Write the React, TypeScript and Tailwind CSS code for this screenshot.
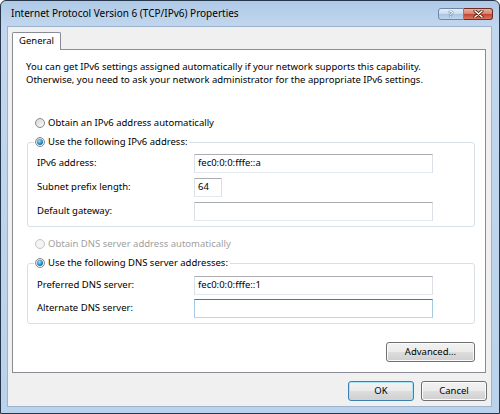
import type { ReactNode } from "react";

function Radio({ checked = false, disabled = false }: { checked?: boolean; disabled?: boolean }) {
    return (
        <span
            className={
                disabled
                    ? "flex h-[10px] w-[10px] shrink-0 items-center justify-center rounded-full border border-[#c4c4c4] bg-[#f4f4f4]"
                    : "flex h-[10px] w-[10px] shrink-0 items-center justify-center rounded-full border border-[#8a8a8a] bg-[linear-gradient(135deg,#d6d6d6,#fbfbfb)]"
            }
        >
            {checked && (
                <span className="h-[6px] w-[6px] rounded-full bg-[radial-gradient(circle_at_40%_35%,#9be3ff,#1f84c8_55%,#0b4f86)]" />
            )}
        </span>
    );
}

function TextBox({ value = "", width, focused = false }: { value?: string; width: string; focused?: boolean }) {
    return (
        <div
            className={
                (focused
                    ? "border-t-[#3d7bad] border-x-[#a4c9e3] border-b-[#b7d9ed] "
                    : "border-t-[#abadb3] border-x-[#dbdfe6] border-b-[#e3e9ef] ") +
                width +
                " flex h-[19px] items-center border bg-white pl-[3px]"
            }
        >
            {value}
        </div>
    );
}

function Field({ label, children }: { label: string; children: ReactNode }) {
    return (
        <div className="flex h-[19px] items-center">
            <span className="w-[157px]">{label}</span>
            {children}
        </div>
    );
}

function Button({ label, width, primary = false }: { label: string; width: string; primary?: boolean }) {
    return (
        <div
            className={
                (primary
                    ? "border-[#3c7fb1] shadow-[inset_0_0_0_1px_#a9e1f7] "
                    : "border-[#707070] shadow-[inset_0_0_0_1px_#fbfbfb] ") +
                width +
                " flex h-[20px] items-center justify-center rounded-[3px] border bg-[linear-gradient(to_bottom,#f2f2f2_0%,#ebebeb_48%,#dddddd_52%,#cfcfcf_100%)]"
            }
        >
            {label}
        </div>
    );
}

export default function App() {
    return (
        <div className="flex h-[414px] w-[500px] flex-col overflow-hidden rounded-t-[6px] border border-[#25364a] bg-[linear-gradient(to_bottom,#afc9e6,#c2d7ee_26px,#bad2eb)] font-['Noto_Sans',sans-serif] text-[9.5px] text-black">
            <div className="flex h-[25px] shrink-0 items-center pl-[10px] pr-[6px]">
                <span className="text-[10px]">Internet Protocol Version 6 (TCP/IPv6) Properties</span>
                <div className="ml-auto flex">
                    <div className="flex h-[12px] w-[26px] items-center justify-center rounded-l-[3px] border border-[#6a87aa] bg-[linear-gradient(to_bottom,#e6eff9,#c9daee_50%,#a9c3e1_50%,#c1d6ee)] text-[9px] font-bold leading-none text-white [text-shadow:0_0_1px_#2a4668,0_0_1px_#2a4668]">
                        ?
                    </div>
                    <div className="flex h-[12px] w-[29px] items-center justify-center rounded-r-[3px] border border-l-0 border-[#6e2b20] bg-[linear-gradient(to_bottom,#e9b2a4,#d67f6b_50%,#c2432c_50%,#d9765e)]">
                        <svg width="11" height="8" viewBox="0 0 11 8">
                            <path d="M2 1 L9 7 M9 1 L2 7" stroke="#4a1a12" strokeWidth="3" strokeLinecap="round" />
                            <path d="M2 1 L9 7 M9 1 L2 7" stroke="#ffffff" strokeWidth="1.6" strokeLinecap="round" />
                        </svg>
                    </div>
                </div>
            </div>

            <div className="mb-[6px] ml-[6px] mr-[7px] flex flex-1 flex-col border border-[#9cb3cd] bg-[#f0f0f0] px-[4px] pb-[5px] pt-[5px]">
                <div className="flex">
                    <div className="relative z-10 -mb-px flex h-[18px] w-[49px] items-center rounded-t-[2px] border border-b-0 border-[#898c95] bg-white pl-[6px]">
                        General
                    </div>
                </div>
                <div className="mr-[1px] flex h-[324px] flex-col border border-[#898c95] bg-white pl-[13px] pr-[10px] pt-[10px]">
                    <p className="leading-[13px]">
                        You can get IPv6 settings assigned automatically if your network supports this capability.
                        <br />
                        Otherwise, you need to ask your network administrator for the appropriate IPv6 settings.
                    </p>

                    <div className="mt-[30px] flex h-[14px] items-center gap-[3px] pl-[9px]">
                        <Radio />
                        <span>Obtain an IPv6 address automatically</span>
                    </div>

                    <fieldset className="ml-[1px] mt-[5px] rounded-[3px] border border-[#d5dfe5]">
                        <legend className="ml-[6px] px-[1px] pr-[2px]">
                            <span className="flex h-[14px] items-center gap-[3px]">
                                <Radio checked />
                                <span>Use the following IPv6 address:</span>
                            </span>
                        </legend>
                        <div className="flex flex-col gap-[5px] pb-[5px] pl-[9px] pt-[5px]">
                            <Field label="IPv6 address:">
                                <TextBox value="fec0:0:0:fffe::a" width="w-[239px]" />
                            </Field>
                            <Field label="Subnet prefix length:">
                                <TextBox value="64" width="w-[28px]" />
                            </Field>
                            <Field label="Default gateway:">
                                <TextBox width="w-[239px]" />
                            </Field>
                        </div>
                    </fieldset>

                    <div className="mt-[10px] flex h-[14px] items-center gap-[3px] pl-[9px] text-[#a0a0a0]">
                        <Radio disabled />
                        <span>Obtain DNS server address automatically</span>
                    </div>

                    <fieldset className="ml-[1px] mt-[5px] rounded-[3px] border border-[#d5dfe5]">
                        <legend className="ml-[6px] px-[1px] pr-[2px]">
                            <span className="flex h-[14px] items-center gap-[3px]">
                                <Radio checked />
                                <span>Use the following DNS server addresses:</span>
                            </span>
                        </legend>
                        <div className="flex flex-col gap-[4px] pb-[5px] pl-[9px] pt-[6px]">
                            <Field label="Preferred DNS server:">
                                <TextBox value="fec0:0:0:fffe::1" width="w-[239px]" />
                            </Field>
                            <Field label="Alternate DNS server:">
                                <TextBox width="w-[239px]" focused />
                            </Field>
                        </div>
                    </fieldset>

                    <div className="mt-[18px] flex justify-end">
                        <Button label="Advanced..." width="w-[89px]" />
                    </div>
                </div>

                <div className="mt-[8px] flex justify-end gap-[7px]">
                    <Button label="OK" width="w-[66px]" primary />
                    <Button label="Cancel" width="w-[66px]" />
                </div>
            </div>
        </div>
    );
}
